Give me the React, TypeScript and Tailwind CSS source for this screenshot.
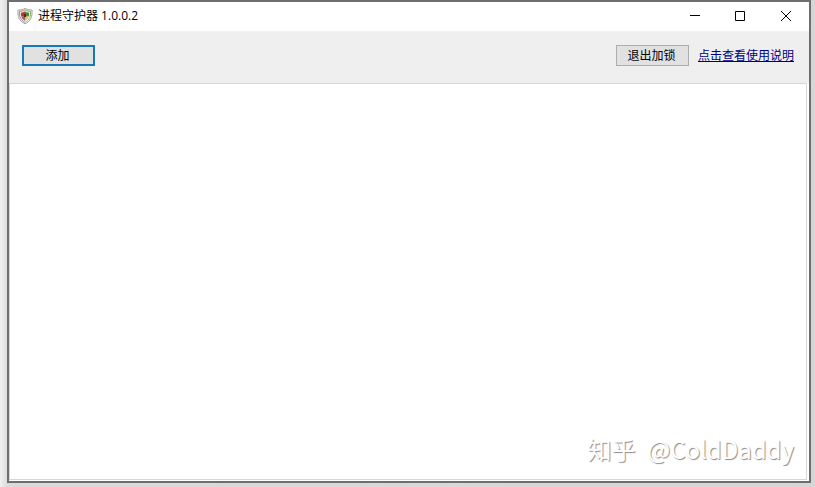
function ShieldIcon() {
  return (
    <svg viewBox="0 0 16 16" className="mb-px h-4 w-4 shrink-0" aria-hidden="true">
      <path d="M8 .4 C10 1.6 12.4 2 15 2 C15.6 8.5 13.6 13.2 8 15.8 C2.4 13.2 .4 8.5 1 2 C3.6 2 6 1.6 8 .4Z" fill="#f8f8f6" stroke="#999996" strokeWidth=".9" />
      {/* Coloured ring, one tint per quarter */}
      <g fill="none" strokeWidth=".9">
        <path d="M8 1.9 C6.2 3 4.4 3.3 2.5 3.4 C2.3 5.5 2.4 7 2.9 8.6" stroke="#c96a60" />
        <path d="M8 1.9 C9.8 3 11.6 3.3 13.5 3.4 C13.7 5.5 13.6 7 13.1 8.6" stroke="#6ea356" />
        <path d="M2.9 8.6 C3.6 11.2 5.3 13 8 14.3" stroke="#8f86bd" />
        <path d="M13.1 8.6 C12.4 11.2 10.7 13 8 14.3" stroke="#cdb850" />
      </g>
      {/* Core */}
      <path d="M8 3.5 C6.7 4.3 5.3 4.6 3.9 4.7 C3.8 6 3.9 7.2 4.2 8.4 H8Z" fill="#bd3a30" />
      <path d="M8 3.5 C9.3 4.3 10.7 4.6 12.1 4.7 C12.2 6 12.1 7.2 11.8 8.4 H8Z" fill="#4f8a38" />
      <path d="M4.2 8.4 H8 V12.8 C6 11.7 4.8 10.3 4.2 8.4Z" fill="#a15b62" />
      <path d="M8 8.4 H11.8 C11.2 10.3 10 11.7 8 12.8Z" fill="#dcc647" />
      <path d="M6.8 6 H9 V9 H6.8Z" fill="#4a2a1c" />
    </svg>
  );
}

function TitleBar() {
  return (
    <header className="flex h-[29px] items-center bg-white pl-2">
      <ShieldIcon />
      <h1 className="ml-1 flex-1 pb-px pl-px text-xs leading-4 text-black">进程守护器 1.0.0.2</h1>
      <div className="flex h-full">
        <button type="button" aria-label="最小化" className="flex w-[46px] items-center justify-center">
          <svg viewBox="0 0 11 11" className="h-[11px] w-[11px]" fill="none" stroke="#000">
            <path d="M0 4.5 H10" />
          </svg>
        </button>
        <button type="button" aria-label="最大化" className="flex w-[45px] items-center justify-center">
          <svg viewBox="0 0 11 11" className="h-[11px] w-[11px]" fill="none" stroke="#000">
            <path d="M.5 .5 H9.5 V9.5 H.5Z" />
          </svg>
        </button>
        <button type="button" aria-label="关闭" className="flex w-[46px] items-center justify-center">
          <svg viewBox="0 0 11 11" className="h-[11px] w-[11px]" fill="none" stroke="#000">
            <path d="M0 0 L10 10 M10 0 L0 10" />
          </svg>
        </button>
      </div>
    </header>
  );
}

function Toolbar() {
  return (
    <div className="flex h-[52px] items-center bg-[#efefef] pr-[15px] pb-[3px] pl-[13px]">
      <button type="button" className="h-[21px] w-[73px] border-2 border-[#1979b8] bg-[#e1e1e1] pr-0.5 text-xs leading-4 text-black">
        添加
      </button>
      <button type="button" className="ml-auto h-[21px] w-[73px] border border-[#adadad] bg-[#e1e1e1] pr-0.5 text-xs leading-4 text-black">
        退出加锁
      </button>
      <a href="#help" className="ml-[9px] text-xs leading-4 text-[#00007f] underline">
        点击查看使用说明
      </a>
    </div>
  );
}

export default function App() {
  return (
    <div className="flex min-h-screen bg-linear-to-r from-[#f1f1f1] from-0% via-[#dadada] via-1% to-[#d6d6d6] pr-1 pb-1 pl-[7px]">
      <div className="flex flex-1 flex-col border-2 border-[#6e6e6e] bg-white font-['Open_Sans','Noto_Sans_CJK_SC',sans-serif]">
        <TitleBar />
        <Toolbar />
        <main className="relative mr-[2px] mb-px flex-1 border border-[#d6d6d6] bg-white">
          {/* Watermark over the empty process list */}
          <p className="absolute right-3 bottom-3.5 flex gap-3 font-['Noto_Sans_CJK_SC',sans-serif] text-2xl leading-8 whitespace-nowrap text-white [text-shadow:1px_1px_1px_#8c8c8c]">
            <span>知乎</span>
            <span>@ColdDaddy</span>
          </p>
        </main>
      </div>
    </div>
  );
}
